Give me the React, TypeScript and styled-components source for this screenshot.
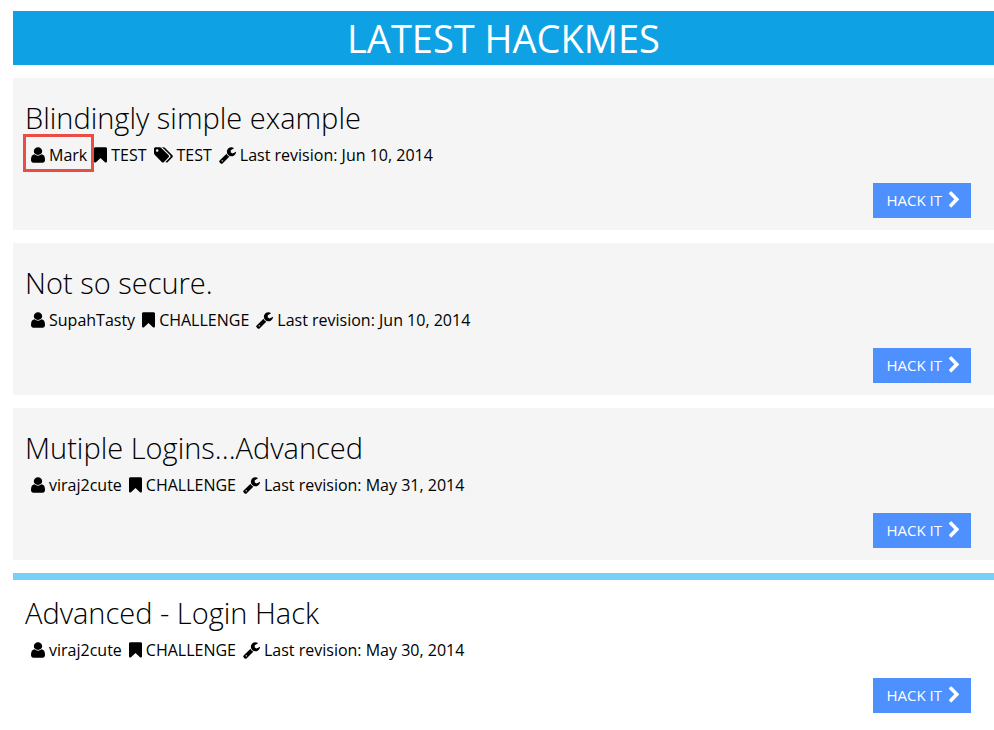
import React from 'react';
import styled, { createGlobalStyle, css } from 'styled-components';

const GlobalStyle = createGlobalStyle`
  *, *::before, *::after { box-sizing: border-box; }
  body {
    margin: 0;
    background: #fff;
    color: #000;
    font-family: "Open Sans", "Noto Sans", sans-serif;
    font-size: 16px;
    line-height: 24px;
  }
`;

const Page = styled.main`
  display: flex;
  flex-direction: column;
  gap: 13px;
  padding: 11px 0 0 13px;
`;

const Banner = styled.h1`
  margin: 0;
  background: #0ea2e4;
  color: #fff;
  font-size: 38px;
  font-weight: 400;
  line-height: 54px;
  text-align: center;
  text-transform: uppercase;
`;

const Card = styled.article<{ $active?: boolean }>`
  display: flex;
  flex-direction: column;
  padding: ${p => (p.$active ? '14px' : '21px')} 23px 12px 12px;
  border-top: ${p => (p.$active ? '7px solid #78cff8' : '0')};
  background: ${p => (p.$active ? '#fff' : '#f5f5f5')};
`;

const Title = styled.h2`
  margin: 0;
  font-size: 29px;
  font-weight: 300;
  line-height: 38px;
`;

const Meta = styled.div`
  display: flex;
  align-items: center;
  gap: 7px;
  height: 36px;
  padding-left: 6px;
`;

const MetaItem = styled.span<{ $marked?: boolean }>`
  position: relative;
  display: flex;
  align-items: center;
  gap: 4px;
  white-space: nowrap;
  ${p => p.$marked && css`
    &::after {
      content: '';
      position: absolute;
      z-index: 1;
      inset: -9px -7px -5px -8px;
      border: 3px solid #ea4c46;
    }
  `}
`;

const HackButton = styled.button`
  display: flex;
  align-items: center;
  align-self: flex-end;
  gap: 6px;
  height: 35px;
  margin-top: 10px;
  padding: 0 11px 1px 13px;
  border: 0;
  background: #4d90fe;
  color: #fff;
  font: inherit;
  font-size: 15px;
  cursor: pointer;
`;

const Glyph = styled.svg`
  display: block;
  flex: none;
  fill: currentColor;
`;

const glyphs = {
  user: { width: 1280, d: 'M1280 137q0 -109 -62.5 -187t-150.5 -78h-854q-88 0 -150.5 78t-62.5 187q0 85 8.5 160.5t31.5 152t58.5 131t94 89t134.5 34.5q131 -128 313 -128t313 128q76 0 134.5 -34.5t94 -89t58.5 -131t31.5 -152t8.5 -160.5zM1024 1024q0 -159 -112.5 -271.5t-271.5 -112.5t-271.5 112.5t-112.5 271.5t112.5 271.5t271.5 112.5t271.5 -112.5t112.5 -271.5z' },
  bookmark: { width: 1280, d: 'M1164 1408q23 0 44 -9q33 -13 52.5 -41t19.5 -62v-1289q0 -34 -19.5 -62t-52.5 -41q-19 -8 -44 -8q-48 0 -83 32l-441 424l-441 -424q-36 -33 -83 -33q-23 0 -44 9q-33 13 -52.5 41t-19.5 62v1289q0 34 19.5 62t52.5 41q21 9 44 9h1048z' },
  tags: { width: 1920, d: 'M448 1088q0 53 -37.5 90.5t-90.5 37.5t-90.5 -37.5t-37.5 -90.5t37.5 -90.5t90.5 -37.5t90.5 37.5t37.5 90.5zM1515 512q0 -53 -37 -90l-491 -492q-39 -37 -91 -37q-53 0 -90 37l-715 716q-38 37 -64.5 101t-26.5 117v416q0 52 38 90t90 38h416q53 0 117 -26.5t102 -64.5l715 -714q37 -39 37 -91zM1899 512q0 -53 -37 -90l-491 -492q-39 -37 -91 -37q-36 0 -59 14t-53 45l470 470q37 37 37 90q0 52 -37 91l-715 714q-38 38 -102 64.5t-117 26.5h224q53 0 117 -26.5t102 -64.5l715 -714q37 -39 37 -91z' },
  wrench: { width: 1664, d: 'M384 64q0 26 -19 45t-45 19t-45 -19t-19 -45t19 -45t45 -19t45 19t19 45zM1028 484l-682 -682q-37 -37 -90 -37q-52 0 -91 37l-106 108q-38 36 -38 90q0 53 38 91l681 681q39 -98 114.5 -173.5t173.5 -114.5zM1662 919q0 -39 -23 -106q-47 -134 -164.5 -217.5t-258.5 -83.5q-185 0 -316.5 131.5t-131.5 316.5t131.5 316.5t316.5 131.5q58 0 121.5 -16.5t107.5 -46.5q16 -11 16 -28t-16 -28l-293 -169v-224l193 -107q5 3 79 48.5t135.5 81t70.5 35.5q15 0 23.5 -10t8.5 -25z' },
  chevron: { width: 1216, d: 'M1107 659l-742 -742q-19 -19 -45 -19t-45 19l-166 166q-19 19 -19 45t19 45l531 531l-531 531q-19 19 -19 45t19 45l166 166q19 19 45 19t45 -19l742 -742q19 -19 19 -45t-19 -45z' },
};

function Icon({ name, width }: { name: keyof typeof glyphs; width: number }) {
  const glyph = glyphs[name];
  return (
    <Glyph width={width} height={18} viewBox={`0 0 ${glyph.width} 1792`} preserveAspectRatio="none" aria-hidden="true">
      <path transform="translate(0 1536) scale(1 -1)" d={glyph.d} />
    </Glyph>
  );
}

type Hackme = { title: string; author: string; kind: string; tag?: string; date: string; marked?: boolean; active?: boolean };

const hackmes: Hackme[] = [
  { title: 'Blindingly simple example', author: 'Mark', kind: 'TEST', tag: 'TEST', date: 'Jun 10, 2014', marked: true },
  { title: 'Not so secure.', author: 'SupahTasty', kind: 'CHALLENGE', date: 'Jun 10, 2014' },
  { title: 'Mutiple Logins...Advanced', author: 'viraj2cute', kind: 'CHALLENGE', date: 'May 31, 2014' },
  { title: 'Advanced - Login Hack', author: 'viraj2cute', kind: 'CHALLENGE', date: 'May 30, 2014', active: true },
];

export default function App() {
  return (
    <>
      <GlobalStyle />
      <Page>
        <Banner>Latest Hackmes</Banner>
        {hackmes.map(h => (
          <Card key={h.title} $active={h.active}>
            <Title>{h.title}</Title>
            <Meta>
              <MetaItem $marked={h.marked}><Icon name="user" width={14} />{h.author}</MetaItem>
              <MetaItem><Icon name="bookmark" width={13} />{h.kind}</MetaItem>
              {h.tag && <MetaItem><Icon name="tags" width={19} />{h.tag}</MetaItem>}
              <MetaItem><Icon name="wrench" width={17} />Last revision: {h.date}</MetaItem>
            </Meta>
            <HackButton type="button">HACK IT <Icon name="chevron" width={12} /></HackButton>
          </Card>
        ))}
      </Page>
    </>
  );
}
